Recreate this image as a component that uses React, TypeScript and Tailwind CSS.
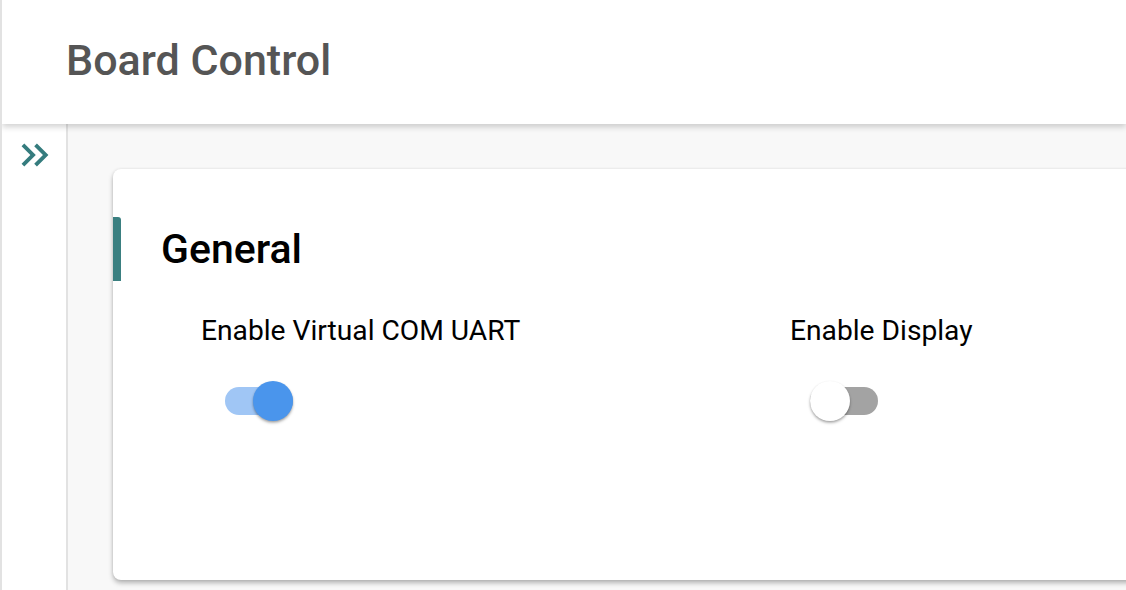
import React from "react";

function Toggle({ on }: { on: boolean }) {
    return (
        <div className="relative w-[68px] h-[40px] flex items-center">
            <div className={`w-[68px] h-[28px] rounded-full ${on ? "bg-[#a0c6f5]" : "bg-[#a3a3a3]"}`} />
            <div
                className={`absolute top-0 w-[40px] h-[40px] rounded-full shadow-[0_2px_3px_rgba(0,0,0,0.25),0_1px_2px_rgba(0,0,0,0.15)] ${
                    on ? "left-[28px] bg-[#4a95ec]" : "left-0 bg-white"
                }`}
            />
        </div>
    );
}

function Setting({ label, on, indent }: { label: string; on: boolean; indent: string }) {
    return (
        <div className="flex flex-col">
            <div className="text-[28.2px] leading-[42px] text-black">{label}</div>
            <div className={`mt-[29px] ${indent}`}>
                <Toggle on={on} />
            </div>
        </div>
    );
}

export default function App() {
    return (
        <div className="w-full h-[590px] overflow-hidden flex flex-col border-l-2 border-[#e2e2e2] font-['Roboto',sans-serif]">
            {/* header */}
            <div className="relative z-10 h-[124px] shrink-0 bg-white flex items-center pl-[64px] shadow-[0_3px_6px_rgba(0,0,0,0.18)]">
                <h1 className="text-[43px] font-medium text-[#555555] leading-none pb-[3px]">Board Control</h1>
            </div>

            <div className="flex flex-1 min-h-0">
                {/* sidebar */}
                <div className="w-[66px] shrink-0 bg-white border-r-2 border-[#e2e2e2] pt-[8px] pl-[10px]">
                    <svg viewBox="0 0 24 24" className="w-[46px] h-[46px] fill-[#357c7e]">
                        <path d="M6.41 6 5 7.41 9.58 12 5 16.59 6.41 18l6-6z" />
                        <path d="M13 6l-1.41 1.41L16.17 12l-4.58 4.59L13 18l6-6z" />
                    </svg>
                </div>

                {/* content */}
                <div className="flex-1 bg-[#f8f8f8] pl-[45px] pt-[45px] -mr-[20px]">
                    <div className="bg-white rounded-lg h-[411px] shadow-[0_3px_5px_rgba(0,0,0,0.28),0_0_3px_rgba(0,0,0,0.08)] pt-[48px]">
                        <div className="flex items-center h-[64px]">
                            <div className="w-[8px] h-[64px] bg-[#3a7f80] rounded-tr-[3px]" />
                            <h2 className="ml-[40px] text-[41px] font-medium text-black leading-none">General</h2>
                        </div>
                        <div className="flex mt-[29px] pl-[88px]">
                            <div className="w-[589px]">
                                <Setting label="Enable Virtual COM UART" on={true} indent="pl-[24px]" />
                            </div>
                            <div>
                                <Setting label="Enable Display" on={false} indent="pl-[20px]" />
                            </div>
                        </div>
                    </div>
                </div>
            </div>
        </div>
    );
}
